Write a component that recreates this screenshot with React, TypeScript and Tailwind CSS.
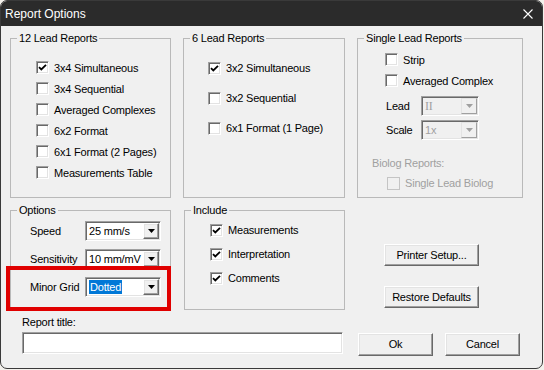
import React from "react";

const sunken =
  "border border-t-[#a0a0a0] border-l-[#a0a0a0] border-b-white border-r-white shadow-[inset_1px_1px_0_#696969,inset_-1px_-1px_0_#e3e3e3]";
const raised =
  "border border-t-white border-l-white border-b-[#696969] border-r-[#696969] shadow-[inset_-1px_-1px_0_#a0a0a0,inset_1px_1px_0_#e3e3e3]";

function GroupBox({
  title,
  className,
  children,
}: {
  title: string;
  className: string;
  children?: React.ReactNode;
}) {
  return (
    <fieldset className={`border border-[#b9b9b9] ${className}`}>
      <legend className="ml-[6px] px-[2px] text-[11px] leading-[14px]">{title}</legend>
      {children}
    </fieldset>
  );
}

function Check({
  label,
  checked,
  disabled,
  className = "",
}: {
  label: string;
  checked?: boolean;
  disabled?: boolean;
  className?: string;
}) {
  return (
    <div className={`flex items-center gap-[5px] ${className}`}>
      <div
        className={`w-[13px] h-[13px] flex items-center justify-center ${
          disabled ? "border border-[#c4c4c4] bg-[#f0f0f0]" : `${sunken} bg-white`
        }`}
      >
        {checked && (
          <svg width="9" height="9" viewBox="0 0 9 9">
            <polyline points="1,4.2 3.3,6.5 8,1.8" fill="none" stroke="#000" strokeWidth="1.8" />
          </svg>
        )}
      </div>
      <span className={`text-[11px] leading-[14px] ${disabled ? "text-[#a0a0a0]" : ""}`}>{label}</span>
    </div>
  );
}

function Arrow({ color }: { color: string }) {
  return (
    <svg width="7" height="4" viewBox="0 0 7 4">
      <polygon points="0,0 7,0 3.5,4" fill={color} />
    </svg>
  );
}

function Combo({
  value,
  width,
  height = "h-[20px]",
  disabled,
  selected,
  serif,
}: {
  value: string;
  width: string;
  height?: string;
  disabled?: boolean;
  selected?: boolean;
  serif?: boolean;
}) {
  return (
    <div className={`${width} ${height} ${sunken} flex items-stretch p-[1px] ${disabled ? "bg-[#f0f0f0]" : "bg-white"}`}>
      <div className="flex-1 flex items-center pl-[2px]">
        <span
          className={`text-[11px] leading-[14px] ${serif ? "font-['Liberation_Serif',serif] text-[12px]" : ""} ${
            disabled ? "text-[#a0a0a0]" : selected ? "bg-[#0078d7] text-white px-[1px]" : ""
          }`}
        >
          {value}
        </span>
      </div>
      <div
        className={`w-[16px] flex items-center justify-center bg-[#f0f0f0] ${
          disabled ? "border border-t-[#e3e3e3] border-l-[#e3e3e3] border-b-[#a0a0a0] border-r-[#a0a0a0]" : raised
        }`}
      >
        <Arrow color={disabled ? "#a0a0a0" : "#000"} />
      </div>
    </div>
  );
}

function Btn({ label, className }: { label: string; className: string }) {
  return (
    <div className={`${className} ${raised} bg-[#f0f0f0] flex items-center justify-center text-[11px]`}>
      {label}
    </div>
  );
}

export default function App() {
  return (
    <div className="w-[544px] h-[370px] bg-[#f3f1ec] font-['Liberation_Sans',Arial,sans-serif] text-black relative tracking-[-0.2px]">
      <div className="w-[543px] h-[369px] border border-[#3a3a3a] rounded-b-[7px] rounded-t-[7px] overflow-hidden bg-[#f0f0f0] flex flex-col">
        <div className="h-[25px] bg-[#2b2b2b] flex items-center justify-between pl-[4px] pr-[9px]">
          <span className="text-white text-[12px] tracking-normal">Report Options</span>
          <svg width="10" height="10" viewBox="0 0 10 10">
            <path d="M0.5 0.5 L9.5 9.5 M9.5 0.5 L0.5 9.5" stroke="#fff" strokeWidth="1.1" />
          </svg>
        </div>

        <div className="flex mt-[5px] pl-[9px] gap-[12px]">
          <GroupBox title="12 Lead Reports" className="w-[161px] h-[167px]">
            <div className="pt-[12px] pl-[25px] flex flex-col">
              {[
                ["3x4 Simultaneous", true],
                ["3x4 Sequential", false],
                ["Averaged Complexes", false],
                ["6x2 Format", false],
                ["6x1 Format (2 Pages)", false],
                ["Measurements Table", false],
              ].map(([l, c], i) => (
                <Check key={i} label={l as string} checked={c as boolean} className="h-[21px]" />
              ))}
            </div>
          </GroupBox>
          <GroupBox title="6 Lead Reports" className="w-[162px] h-[167px]">
            <div className="pt-[8px] pl-[24px] flex flex-col">
              <Check label="3x2 Simultaneous" checked className="h-[30px]" />
              <Check label="3x2 Sequential" className="h-[30px]" />
              <Check label="6x1 Format (1 Page)" className="h-[30px]" />
            </div>
          </GroupBox>
          <GroupBox title="Single Lead Reports" className="w-[166px] h-[167px]">
            <div className="pt-[4px] flex flex-col">
              <Check label="Strip" className="h-[21px] pl-[27px]" />
              <Check label="Averaged Complex" className="h-[21px] pl-[27px]" />
              <div className="flex items-center mt-[5px] pl-[28px]">
                <span className="w-[35px] text-[11px]">Lead</span>
                <Combo value="II" width="w-[58px]" disabled serif />
              </div>
              <div className="flex items-center mt-[4px] pl-[28px]">
                <span className="w-[35px] text-[11px]">Scale</span>
                <Combo value="1x" width="w-[58px]" disabled />
              </div>
              <div className="mt-[16px] pl-[14px] text-[11px] leading-[14px] text-[#a0a0a0]">Biolog Reports:</div>
              <Check label="Single Lead Biolog" disabled className="h-[16px] mt-[5px] pl-[29px]" />
            </div>
          </GroupBox>
        </div>

        <div className="flex mt-[5px] pl-[9px]">
          <GroupBox title="Options" className="w-[161px] h-[107px]">
            <div className="pt-[4px] pl-[19px] flex flex-col gap-[8px]">
              <div className="flex items-center h-[20px]">
                <span className="w-[55px] text-[11px]">Speed</span>
                <Combo value="25 mm/s" width="w-[76px]" />
              </div>
              <div className="flex items-center h-[20px]">
                <span className="w-[55px] text-[11px]">Sensitivity</span>
                <Combo value="10 mm/mV" width="w-[76px]" />
              </div>
              <div className="flex items-center h-[20px]">
                <span className="w-[55px] text-[11px]">Minor Grid</span>
                <Combo value="Dotted" width="w-[76px]" selected />
              </div>
            </div>
          </GroupBox>
          <GroupBox title="Include" className="w-[161px] h-[107px] ml-[13px]">
            <div className="pt-[1px] pl-[25px] flex flex-col">
              <Check label="Measurements" checked className="h-[24px]" />
              <Check label="Interpretation" checked className="h-[24px]" />
              <Check label="Comments" checked className="h-[24px]" />
            </div>
          </GroupBox>
          <div className="ml-[39px] pt-[41px] flex flex-col gap-[20px]">
            <Btn label="Printer Setup..." className="w-[95px] h-[22px]" />
            <Btn label="Restore Defaults" className="w-[95px] h-[22px]" />
          </div>
        </div>

        <div className="flex">
          <div className="ml-[21px] flex flex-col">
            <span className="mt-[5px] text-[11px] leading-[14px]">Report title:</span>
            <div className={`mt-[3px] w-[321px] h-[22px] bg-white ${sunken}`} />
          </div>
          <div className="ml-[15px] mt-[23px] flex gap-[12px]">
            <Btn label="Ok" className="w-[75px] h-[23px]" />
            <Btn label="Cancel" className="w-[75px] h-[23px]" />
          </div>
        </div>
      </div>

      <div className="absolute left-[6px] top-[266px] w-[165px] h-[45px] border-4 border-[#e00000]" />
    </div>
  );
}
